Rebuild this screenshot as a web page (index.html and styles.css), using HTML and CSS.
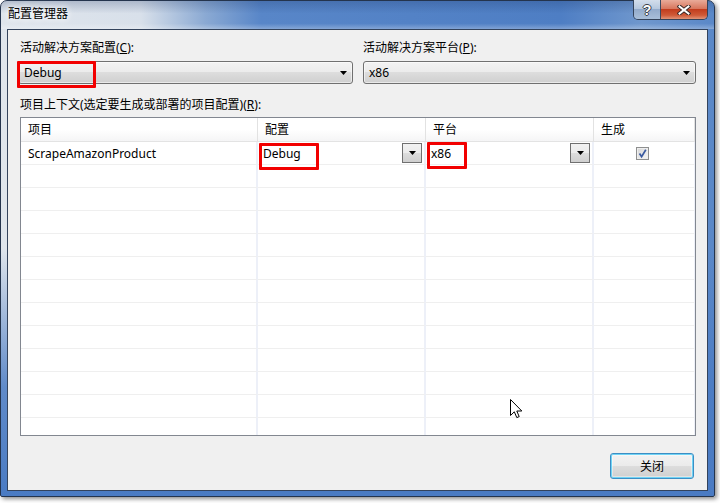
FILE: index.html
```html
<!DOCTYPE html>
<html lang="zh-CN">
<head>
<meta charset="utf-8">
<title>配置管理器</title>
<link rel="stylesheet" href="styles.css">
</head>
<body>
<div class="window">
  <div class="titlebar">
    <span class="title">配置管理器</span>
    <div class="caps">
      <div class="cap help"><span>?</span></div>
      <div class="cap close">
        <svg width="14" height="10" viewBox="0 0 14 10"><path d="M2.5 1.5 L11.5 8.5 M11.5 1.5 L2.5 8.5" stroke="#3a2a28" stroke-width="4" stroke-linecap="square"/><path d="M2.5 1.5 L11.5 8.5 M11.5 1.5 L2.5 8.5" stroke="#fff" stroke-width="2" stroke-linecap="square"/></svg>
      </div>
    </div>
  </div>
  <div class="client">
    <div class="top">
      <div class="field">
        <div class="lbl lbl-first">活动解决方案配置(<u>C</u>):</div>
        <div class="combo">
          <span>Debug</span>
          <svg class="arrow" width="7" height="4" viewBox="0 0 7 4"><polygon points="0,0 7,0 3.5,4" fill="#000"/></svg>
          <div class="mark mark-combo"></div>
        </div>
      </div>
      <div class="field">
        <div class="lbl">活动解决方案平台(<u>P</u>):</div>
        <div class="combo">
          <span>x86</span>
          <svg class="arrow" width="7" height="4" viewBox="0 0 7 4"><polygon points="0,0 7,0 3.5,4" fill="#000"/></svg>
        </div>
      </div>
    </div>
    <div class="lbl lbl-first lbl-ctx">项目上下文(选定要生成或部署的项目配置)(<u>R</u>):</div>
    <div class="grid">
      <div class="row head">
        <div class="cell">项目</div>
        <div class="cell">配置</div>
        <div class="cell">平台</div>
        <div class="cell">生成</div>
      </div>
      <div class="row">
        <div class="cell">ScrapeAmazonProduct</div>
        <div class="cell sel">
          <span>Debug</span>
          <div class="dd"><svg width="7" height="4" viewBox="0 0 7 4"><polygon points="0,0 7,0 3.5,4" fill="#000"/></svg></div>
          <div class="mark mark-cfg"></div>
        </div>
        <div class="cell sel">
          <span>x86</span>
          <div class="dd"><svg width="7" height="4" viewBox="0 0 7 4"><polygon points="0,0 7,0 3.5,4" fill="#000"/></svg></div>
          <div class="mark mark-plat"></div>
        </div>
        <div class="cell center">
          <div class="chk"><svg width="11" height="11" viewBox="0 0 11 11"><path d="M2.5 5.5 L4.6 8.6 L8.8 1.8" fill="none" stroke="#3a5aa0" stroke-width="1.7"/></svg></div>
        </div>
      </div>
      <div class="row"><div class="cell"></div><div class="cell"></div><div class="cell"></div><div class="cell"></div></div>
      <div class="row"><div class="cell"></div><div class="cell"></div><div class="cell"></div><div class="cell"></div></div>
      <div class="row"><div class="cell"></div><div class="cell"></div><div class="cell"></div><div class="cell"></div></div>
      <div class="row"><div class="cell"></div><div class="cell"></div><div class="cell"></div><div class="cell"></div></div>
      <div class="row"><div class="cell"></div><div class="cell"></div><div class="cell"></div><div class="cell"></div></div>
      <div class="row"><div class="cell"></div><div class="cell"></div><div class="cell"></div><div class="cell"></div></div>
      <div class="row"><div class="cell"></div><div class="cell"></div><div class="cell"></div><div class="cell"></div></div>
      <div class="row"><div class="cell"></div><div class="cell"></div><div class="cell"></div><div class="cell"></div></div>
      <div class="row"><div class="cell"></div><div class="cell"></div><div class="cell"></div><div class="cell"></div></div>
      <div class="row"><div class="cell"></div><div class="cell"></div><div class="cell"></div><div class="cell"></div></div>
      <div class="row"><div class="cell"></div><div class="cell"></div><div class="cell"></div><div class="cell"></div></div>
      <div class="row"><div class="cell"></div><div class="cell"></div><div class="cell"></div><div class="cell"></div></div>
    </div>
    <div class="footer">
      <button class="btn">关闭</button>
    </div>
  </div>
</div>
<svg class="cursor" width="13" height="20" viewBox="0 0 13 20"><path d="M0.5 0.5 V16.5 L4.3 12.8 L6.8 18.6 L9.2 17.6 L6.8 12 H11.8 Z" fill="#fff" stroke="#000" stroke-width="1" stroke-linejoin="miter"/></svg>
</body>
</html>
```
FILE: styles.css
```css
* { box-sizing: border-box; margin: 0; padding: 0; }
html, body { width: 720px; height: 503px; background: #fff; overflow: hidden; }
body {
  position: relative;
  font: 12px/16px "Noto Sans", "Noto Sans CJK SC", sans-serif;
  color: #000;
}
u { text-decoration: underline; text-underline-offset: 1px; }

.window {
  width: 715px;
  height: 497px;
  border: 1px solid #24344d;
  border-radius: 7px 7px 2px 2px;
  padding: 0 6px 5px;
  display: flex;
  flex-direction: column;
  background:
    linear-gradient(to bottom, rgba(74,123,195,0) 50%, rgba(74,123,195,.85) 78%, #4a7bc3 100%),
    linear-gradient(90deg, #dfe5ec 0, #d8e0ea 140px, #8aa9d3 205px, #5886c8 260px, #4e7ec4 560px, #6f97cd 640px, #5a88c8 100%);
  box-shadow: 2px 2px 4px rgba(0,0,0,.45);
}

.titlebar {
  height: 28px;
  margin: 0 -6px;
  padding: 0 6px 0 7px;
  display: flex;
  justify-content: space-between;
  align-items: flex-start;
  border-radius: 6px 6px 0 0;
  background: linear-gradient(to bottom, rgba(15,40,90,.22), rgba(15,40,90,0) 45%, rgba(255,255,255,0) 80%, rgba(255,255,255,.28));
}
.title {
  padding-top: 5px;
  color: #000;
  text-shadow: 0 0 6px #fff, 0 0 10px rgba(255,255,255,.9);
}
.caps {
  display: flex;
  height: 20px;
  margin-top: -1px;
  border: 1px solid #34435a;
  border-top: 0;
  border-radius: 0 0 5px 5px;
  overflow: hidden;
}
.cap { display: flex; align-items: center; justify-content: center; }
.help {
  width: 27px;
  border-right: 1px solid #3b4a60;
  background: linear-gradient(#d3deeb, #b7c8de 45%, #93abcb 50%, #a9bfd9);
}
.help span {
  font: bold 14px/14px "Liberation Sans", sans-serif;
  color: #fff;
  text-shadow: 1px 0 #3a3f48, -1px 0 #3a3f48, 0 1px #3a3f48, 0 -1px #3a3f48;
}
.close {
  width: 46px;
  background: linear-gradient(#e9ab99 0, #d8775e 45%, #c23d1e 50%, #cf5a38 80%, #e19478 100%);
}

.client {
  flex: 1;
  border: 1px solid #33435c;
  background: #f0f0f0;
  padding: 10px 11px 11px 10px;
  display: flex;
  flex-direction: column;
}
.top {
  display: grid;
  grid-template-columns: 335px 1fr;
  column-gap: 10px;
}
.lbl { margin-bottom: 5px; }
.lbl-first { padding-left: 2px; }
.lbl-ctx { margin: 13px 0 4px; }

.combo {
  position: relative;
  height: 23px;
  border: 1px solid #707070;
  border-radius: 3px;
  background: linear-gradient(#f2f2f2, #ebebeb 50%, #dddddd 50%, #cfcfcf);
  box-shadow: inset 0 0 0 1px rgba(255,255,255,.55);
  display: flex;
  align-items: center;
  justify-content: space-between;
  padding: 1px 5px 0 5px;
}

.mark {
  position: absolute;
  border: 3px solid #f20000;
  border-radius: 1px;
  pointer-events: none;
}
.mark-combo { left: -2px; top: -1px; width: 79px; height: 27px; }
.mark-cfg { left: 1px; top: 1px; width: 60px; height: 27px; }
.mark-plat { left: 1px; top: 0; width: 40px; height: 27px; }

.grid {
  margin-left: 2px;
  height: 319px;
  border: 1px solid #828790;
  background: #fff;
  overflow: hidden;
}
.row {
  display: grid;
  grid-template-columns: 237px 168px 168px 1fr;
  height: 23px;
}
.row .cell {
  border-bottom: 1px solid #efefef;
  border-right: 2px solid #edf0f8;
  padding: 2px 0 0 7px;
  display: flex;
  align-items: center;
  position: relative;
}
.row .cell:last-child { border-right: 1px solid #edf0f8; }
.row.head { height: 24px; }
.row.head .cell {
  padding-top: 1px;
  background: linear-gradient(#ffffff, #ffffff 50%, #f5f5f6);
  border-right: 1px solid #e2e2e2;
  border-bottom: 1px solid #e3e3e3;
}
.row .cell.sel {
  padding: 0 2px 0 5px;
  justify-content: space-between;
}
.row .cell.sel span { padding-top: 2px; }
.row .cell.center { justify-content: center; padding: 0 3px 0 0; }

.dd {
  width: 20px;
  height: 20px;
  border: 1px solid #707070;
  background: linear-gradient(#f2f2f2, #ebebeb 50%, #dddddd 50%, #cfcfcf);
  display: flex;
  align-items: center;
  justify-content: center;
}

.chk {
  width: 13px;
  height: 13px;
  border: 1px solid #8e8f8f;
  background: linear-gradient(135deg, #d6d6d6, #f6f6f6);
  box-shadow: inset 0 0 0 1px #eeeeee;
  display: flex;
  align-items: center;
  justify-content: center;
}

.footer {
  margin-top: 17px;
  padding-right: 2px;
  display: flex;
  justify-content: flex-end;
}
.btn {
  width: 84px;
  height: 26px;
  border: 1px solid #3c8ec4;
  border-radius: 3px;
  background: linear-gradient(#f2f2f2, #ebebeb 50%, #dddddd 50%, #cfcfcf);
  box-shadow: inset 0 0 0 1px #6fd3f5, inset 0 0 0 2px rgba(255,255,255,.4);
  font: 12px/16px "Noto Sans CJK SC", sans-serif;
  color: #000;
}

.cursor {
  position: absolute;
  left: 510px;
  top: 399px;
}
```
